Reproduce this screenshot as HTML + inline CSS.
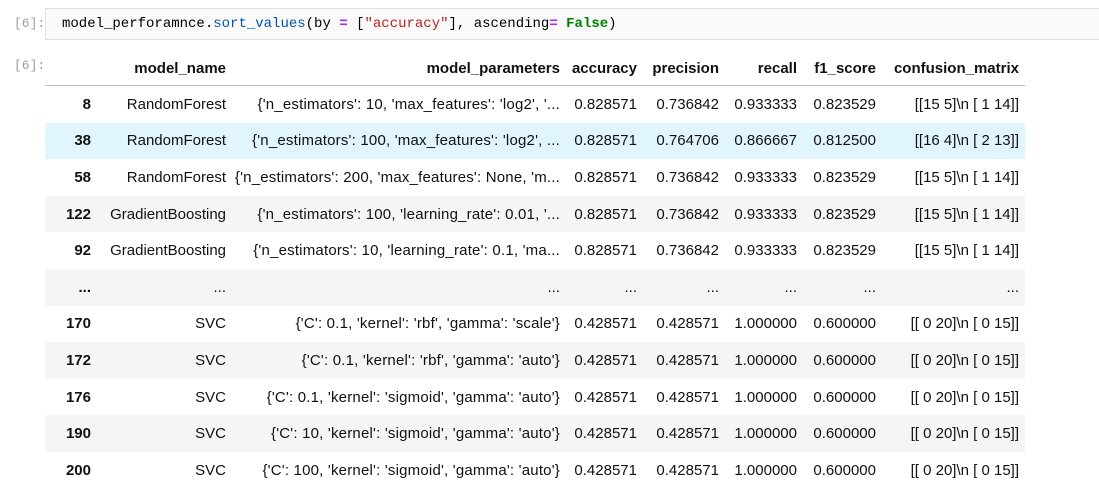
<!DOCTYPE html>
<html><head><meta charset="utf-8"><style>
body{margin:0;background:#fff;width:1099px;height:489px;overflow:hidden;font-family:"Liberation Sans",sans-serif;}
.prompt{position:absolute;left:14px;color:#9e9e9e;font-family:"Liberation Mono",monospace;font-size:13px;}
.code{position:absolute;left:45px;top:8px;width:1060px;height:32px;background:#f9f9f9;border:1px solid #e0e0e0;box-sizing:border-box;font-family:"Liberation Mono",monospace;font-size:14px;line-height:30px;padding-left:16px;color:#000;white-space:nowrap}
.f{color:#0055aa}.o{color:#aa22ff;font-weight:bold}.s{color:#ba2121}.k{color:#008000;font-weight:bold}
table{position:absolute;left:45px;top:50px;width:980px;border-collapse:collapse;table-layout:fixed;font-size:15px;color:#111}
td,th{text-align:right;padding:0 6px 0 0;white-space:nowrap;overflow:hidden;height:36.6px}
thead th{height:34px;padding-top:1px;border-bottom:1px solid #bdbdbd;font-weight:bold}
tbody th{font-weight:bold}
tbody tr:nth-child(even){background:#f5f5f5}
tbody tr.h{background:#e1f5fe}
td.p{letter-spacing:0.2px}
</style></head><body>
<div class="prompt" style="top:16px">[6]:</div>
<div class="code">model_perforamnce.<span class="f">sort_values</span>(by <span class="o">=</span> [<span class="s">"accuracy"</span>], ascending<span class="o">=</span> <span class="k">False</span>)</div>
<div class="prompt" style="top:58px">[6]:</div>
<table>
<colgroup><col style="width:52px"><col style="width:135px"><col style="width:334px"><col style="width:77px"><col style="width:82px"><col style="width:78px"><col style="width:79px"><col style="width:143px"></colgroup>
<thead><tr><th></th><th>model_name</th><th>model_parameters</th><th>accuracy</th><th>precision</th><th>recall</th><th>f1_score</th><th>confusion_matrix</th></tr></thead>
<tbody>
<tr><th>8</th><td>RandomForest</td><td class="p">{'n_estimators': 10, 'max_features': 'log2', '...</td><td>0.828571</td><td>0.736842</td><td>0.933333</td><td>0.823529</td><td>[[15 5]\n [ 1 14]]</td></tr>
<tr class="h"><th>38</th><td>RandomForest</td><td class="p">{'n_estimators': 100, 'max_features': 'log2', ...</td><td>0.828571</td><td>0.764706</td><td>0.866667</td><td>0.812500</td><td>[[16 4]\n [ 2 13]]</td></tr>
<tr><th>58</th><td>RandomForest</td><td class="p">{'n_estimators': 200, 'max_features': None, 'm...</td><td>0.828571</td><td>0.736842</td><td>0.933333</td><td>0.823529</td><td>[[15 5]\n [ 1 14]]</td></tr>
<tr><th>122</th><td>GradientBoosting</td><td class="p">{'n_estimators': 100, 'learning_rate': 0.01, '...</td><td>0.828571</td><td>0.736842</td><td>0.933333</td><td>0.823529</td><td>[[15 5]\n [ 1 14]]</td></tr>
<tr><th>92</th><td>GradientBoosting</td><td class="p">{'n_estimators': 10, 'learning_rate': 0.1, 'ma...</td><td>0.828571</td><td>0.736842</td><td>0.933333</td><td>0.823529</td><td>[[15 5]\n [ 1 14]]</td></tr>
<tr><th>...</th><td>...</td><td>...</td><td>...</td><td>...</td><td>...</td><td>...</td><td>...</td></tr>
<tr><th>170</th><td>SVC</td><td class="p">{'C': 0.1, 'kernel': 'rbf', 'gamma': 'scale'}</td><td>0.428571</td><td>0.428571</td><td>1.000000</td><td>0.600000</td><td>[[ 0 20]\n [ 0 15]]</td></tr>
<tr><th>172</th><td>SVC</td><td class="p">{'C': 0.1, 'kernel': 'rbf', 'gamma': 'auto'}</td><td>0.428571</td><td>0.428571</td><td>1.000000</td><td>0.600000</td><td>[[ 0 20]\n [ 0 15]]</td></tr>
<tr><th>176</th><td>SVC</td><td class="p">{'C': 0.1, 'kernel': 'sigmoid', 'gamma': 'auto'}</td><td>0.428571</td><td>0.428571</td><td>1.000000</td><td>0.600000</td><td>[[ 0 20]\n [ 0 15]]</td></tr>
<tr><th>190</th><td>SVC</td><td class="p">{'C': 10, 'kernel': 'sigmoid', 'gamma': 'auto'}</td><td>0.428571</td><td>0.428571</td><td>1.000000</td><td>0.600000</td><td>[[ 0 20]\n [ 0 15]]</td></tr>
<tr><th>200</th><td>SVC</td><td class="p">{'C': 100, 'kernel': 'sigmoid', 'gamma': 'auto'}</td><td>0.428571</td><td>0.428571</td><td>1.000000</td><td>0.600000</td><td>[[ 0 20]\n [ 0 15]]</td></tr>
</tbody></table>
</body></html>
